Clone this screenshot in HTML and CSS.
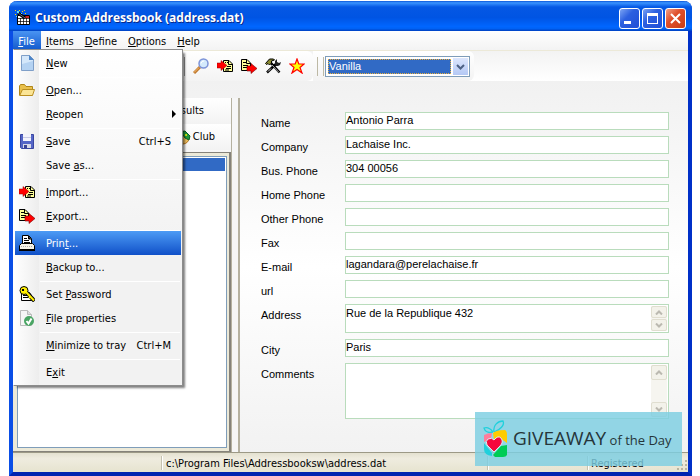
FILE: index.html
```
<!DOCTYPE html>
<html lang="en">
<head>
 <meta charset="utf-8">
 <title>Custom Addressbook (address.dat)</title>
 <meta name="viewport" content="width=device-width, initial-scale=1">
 <link rel="stylesheet" href="styles.css">
</head>
<body>

<!-- icons used more than once -->
<svg class="sprite" width="0" height="0">
	<symbol id="icon-import" viewBox="0 0 16 16">
		<path fill="#ff9" stroke="#000" d="M6.500 2.500H12L15.500 6V13.500H6.500z"/>
		<path fill="none" stroke="#000" d="M11.500 3v3.500H15M10 8.500h4M9 10.500h5M8 12h4"/>
		<path stroke="#000" stroke-dasharray="1 1" d="M8 4.500h3"/>
		<path fill="#f00" stroke="#900" stroke-width=".5" d="M0 5h4V2.500l6 5-6 5V10H0z"/>
	</symbol>
	<symbol id="icon-export" viewBox="0 0 16 16">
		<path fill="#ff9" stroke="#000" d="M.5 1.500H6L9.500 5V12.500H.5z"/>
		<path fill="none" stroke="#000" d="M5.500 2v3.500H9M2 4.500h3M2 7.500h5M2 9.500h4"/>
		<path fill="#f00" stroke="#700" stroke-width=".6" d="M6 8h4V5.500l6 5-6 5V13H6z"/>
	</symbol>
	<symbol id="arrow-up" viewBox="0 0 8 5"><path fill="none" stroke="#bbb9b0" stroke-width="2" d="M1 4.500L4 1.500l3 3"/></symbol>
	<symbol id="arrow-down" viewBox="0 0 8 5"><path fill="none" stroke="#bbb9b0" stroke-width="2" d="M1 .5L4 3.500l3-3"/></symbol>
</svg>

<div class="window">

	<header class="titlebar">
		<svg class="icon" viewBox="0 0 16 16">
			<path fill="#fff" stroke="#000" d="M2.500 5.500h12v9h-12z"/>
			<path fill="#c22" d="M9 6h5v2H9z"/>
			<path stroke="#000" stroke-width=".7" d="M3 8.500h11M3 11.500h11M5.500 8v6M8.500 8v6M11.500 8v6"/>
			<path stroke="#000" stroke-width="3" d="M3 3l7 5"/>
			<path stroke="#667" d="M3 3l7 5"/>
			<path fill="#fd0" d="M0 0h1v1H0zM4 0h1v1H4zM7 1h1v1H7zM9 0h1v1H9zM0 4h1v1H0zM10 3h1v1h-1z"/>
			<path fill="#5df" d="M2 1h2v2H2zM6 3h1v1H6zM1 6h1v1H1z"/>
		</svg>
		<h1>Custom Addressbook (address.dat)</h1>
		<div class="controls">
			<button type="button" aria-label="Minimize"><svg viewBox="0 0 19 19"><path fill="#fff" d="M4 12h7v3H4z"/></svg></button>
			<button type="button" aria-label="Maximize"><svg viewBox="0 0 19 19"><path fill="#fff" fill-rule="evenodd" d="M4 4h11v11H4zM5 7v7h9V7z"/></svg></button>
			<button type="button" class="close" aria-label="Close"><svg viewBox="0 0 19 19"><path stroke="#fff" stroke-width="2" d="M5 5l9 9M14 5l-9 9"/></svg></button>
		</div>
	</header>

	<nav>
		<ul class="menubar">
			<li class="open">
				<button type="button"><u>F</u>ile</button>
				<ul class="menu">
					<li><button type="button">
						<svg class="icon" viewBox="0 0 16 16"><path fill="#d4e7fa" stroke="#7f9fc8" d="M2.500.5h8l4 4v11h-12z"/><path fill="#b4d2f2" d="M3 9l11-3v9H3z"/><path fill="#4f86c8" d="M10 0l5 5h-5z"/></svg>
						<span><u>N</u>ew</span></button></li>
					<li class="sep"></li>
					<li><button type="button">
						<svg class="icon" viewBox="0 0 16 16"><path fill="#e9c04c" stroke="#b08618" d="M.5 13V4l1-1.500h4L7 4.500h6.500V13z"/><path fill="#fbe596" stroke="#b98f22" d="M.7 13.500L3.500 7.500h12l-2 6z"/></svg>
						<span><u>O</u>pen...</span></button></li>
					<li><button type="button">
						<span><u>R</u>eopen</span>
						<svg class="more" viewBox="0 0 4 8"><path d="M0 0l4 4-4 4z"/></svg></button></li>
					<li class="sep"></li>
					<li><button type="button">
						<svg class="icon" viewBox="0 0 16 16"><path fill="#5566c6" stroke="#3a46a0" d="M1.500 1.500h13v14h-12l-1-1z"/><path fill="#f4f4fb" d="M4 1h8v7H4z"/><path fill="#c9cbe4" d="M4 4h8v1H4z"/><path fill="#d8d9e6" d="M4 11h8v4H4z"/><path fill="#3b4494" d="M5 12h3v3H5z"/></svg>
						<span><u>S</u>ave</span><kbd>Ctrl+S</kbd></button></li>
					<li><button type="button"><span>Save <u>a</u>s...</span></button></li>
					<li class="sep"></li>
					<li><button type="button"><svg class="icon"><use href="#icon-import"/></svg><span><u>I</u>mport...</span></button></li>
					<li><button type="button"><svg class="icon"><use href="#icon-export"/></svg><span><u>E</u>xport...</span></button></li>
					<li class="sep"></li>
					<li class="current"><button type="button">
						<svg class="icon" viewBox="0 0 16 16"><path fill="#fff" stroke="#000" d="M3.500 8.500v-8h6l3 3v5z"/><path stroke="#000" d="M5 3.500h3M5 5.500h5M5 7.500h6M9.500 1v3H12"/><path fill="#f4f2e8" stroke="#000" d="M.5 10.500l2-2h11l2 2v4H.5z"/><path stroke="#aaa" stroke-dasharray="1 1" d="M2 11.500h11"/><path fill="#000" d="M0 14h16v2H0z"/></svg>
						<span>Prin<u>t</u>...</span></button></li>
					<li><button type="button"><span><u>B</u>ackup to...</span></button></li>
					<li class="sep"></li>
					<li><button type="button">
						<svg class="icon" viewBox="0 0 16 16"><path fill="#fff" stroke="#000" d="M2.500 6.500h8l2 3v5h-10z"/><path stroke="#000" d="M4 9.500h4M4 11.500h6"/><path stroke="#000" stroke-width="4" d="M7 6l8.500 9"/><circle cx="5" cy="4.500" r="4" fill="#fe0" stroke="#000"/><path stroke="#fe0" stroke-width="2" d="M7 6l8 8.500M10 12l2-2"/><path fill="#000" d="M3 3h2v2H3z"/></svg>
						<span>Set <u>P</u>assword</span></button></li>
					<li><button type="button">
						<svg class="icon" viewBox="0 0 16 16"><path fill="#f6f6f6" stroke="#bbb" d="M1.500.5h7l4 4v11h-11z"/><path fill="#ddd" stroke="#bbb" d="M8.500.5v4h4"/><circle cx="10" cy="11" r="5" fill="#4aa564"/><path fill="none" stroke="#fff" stroke-width="2" d="M7.500 11l2 2.500 3-5"/></svg>
						<span><u>F</u>ile properties</span></button></li>
					<li class="sep"></li>
					<li><button type="button"><span><u>M</u>inimize to tray</span><kbd>Ctrl+M</kbd></button></li>
					<li class="sep"></li>
					<li><button type="button"><span>E<u>x</u>it</span></button></li>
				</ul>
			</li>
			<li><button type="button"><u>I</u>tems</button></li>
			<li><button type="button"><u>D</u>efine</button></li>
			<li><button type="button"><u>O</u>ptions</button></li>
			<li><button type="button"><u>H</u>elp</button></li>
		</ul>
	</nav>

	<div class="toolbars">
		<div class="toolbar main">
			<button type="button" aria-label="Find">
				<svg class="icon" viewBox="0 0 16 16"><path stroke="#c07a30" stroke-width="3" d="M1 15l6-6"/><path stroke="#f6be74" d="M1 14.500l5-5"/><circle cx="10.500" cy="5.500" r="4.500" fill="#d4eafc" stroke="#7c93d8" stroke-width="1.500"/><path fill="none" stroke="#fff" d="M8 5.500a3 3 0 0 1 3-2.500"/></svg></button>
			<button type="button" aria-label="Import"><svg class="icon"><use href="#icon-import"/></svg></button>
			<button type="button" aria-label="Export"><svg class="icon"><use href="#icon-export"/></svg></button>
			<button type="button" aria-label="Tools">
				<svg class="icon" viewBox="0 0 16 16"><path stroke="#000" stroke-width="2.500" d="M6 5l8.500 9.500M2 14.500L12 5"/><path stroke="#aaa" d="M7 7l7 7.500"/><path stroke="#ddd" d="M3 13.500l3-3"/><path fill="#8a8a30" stroke="#000" d="M.5 5.500l4-4.500h4l1 1-3 1v2l-2 2-1.500-1.500-1.500 1z"/><path fill="#222" d="M10 6V3l2-2v3l2 1 2-1-1 3-2 1h-2z"/></svg></button>
			<button type="button" aria-label="Favorites">
				<svg class="icon" viewBox="0 0 16 16"><path fill="#ff0" stroke="#f00" stroke-width="1.200" d="M8 1l1.800 5h5.400L11 9.500l2 5.500-5-3.500L3 15l2-5.500L.8 6h5.400z"/></svg></button>
		</div>
		<div class="toolbar style">
			<div class="combo">
				<select aria-label="Style"><option>Vanilla</option></select>
				<svg viewBox="0 0 15 17"><path fill="none" stroke="#4d6185" stroke-width="2" d="M4 7l3.500 3.500L11 7"/></svg>
			</div>
		</div>
	</div>

	<main>
		<section class="sidebar">
			<div class="tabs">
				<button type="button">Results</button>
				<button type="button"><svg class="icon" viewBox="0 0 16 16"><circle cx="8" cy="9" r="6" fill="#f0c060" stroke="#b87820"/><path fill="#1f9a3c" stroke="#0b6020" d="M4 3l6-1 5 5-1 4-4-2-2-3-4 1z"/><circle cx="11" cy="6" r="1" fill="#ff0"/></svg>Club</button>
			</div>
			<div class="list"><ul><li class="selected"></li></ul></div>
		</section>

		<form class="card">
			<label for="name">Name</label><input id="name" type="text" value="Antonio Parra">
			<label for="company">Company</label><input id="company" type="text" value="Lachaise Inc.">
			<label for="bus">Bus. Phone</label><input id="bus" type="text" value="304 00056">
			<label for="home">Home Phone</label><input id="home" type="text">
			<label for="other">Other Phone</label><input id="other" type="text">
			<label for="fax">Fax</label><input id="fax" type="text">
			<label for="email">E-mail</label><input id="email" type="text" value="lagandara@perelachaise.fr">
			<label for="url">url</label><input id="url" type="text">
			<label for="address">Address</label>
			<div class="memo short">
				<textarea id="address">Rue de la Republique 432</textarea>
				<div class="scroll"><button type="button" aria-label="Up"><svg><use href="#arrow-up"/></svg></button><button type="button" aria-label="Down"><svg><use href="#arrow-down"/></svg></button></div>
			</div>
			<label for="city">City</label><input id="city" type="text" value="Paris">
			<label for="comments">Comments</label>
			<div class="memo">
				<textarea id="comments"></textarea>
				<div class="scroll"><button type="button" aria-label="Up"><svg><use href="#arrow-up"/></svg></button><button type="button" aria-label="Down"><svg><use href="#arrow-down"/></svg></button></div>
			</div>
		</form>
	</main>

	<footer class="statusbar">
		<span></span>
		<span>c:\Program Files\Addressbooksw\address.dat</span>
		<span></span>
		<span>Registered</span>
		<svg class="grip" viewBox="0 0 12 12"><path fill="#b8b4a0" d="M9 0h2v2H9zM5 4h2v2H5zM9 4h2v2H9zM1 8h2v2H1zM5 8h2v2H5zM9 8h2v2H9z"/></svg>
	</footer>
</div>

<div class="watermark">
	<svg viewBox="0 0 26 38">
		<g fill="none" stroke="#20d0dc" stroke-width="1.300"><path d="M11 12C10 5 15 1 20 1c2 4-3 9-9 11"/><path d="M10 12C7 8 4 7 1 8c1 4 5 5 9 4"/></g>
		<path fill="#ff7d9c" d="M1 15q4-2 8-2l-1 6-7 3z"/>
		<path fill="#fc0" d="M10 13q3-3 12-3 2 1 2 5v8l-7-5-6 2z"/>
		<path fill="#20d0dc" d="M1 23l8 10v3Q1 35 1 29z"/>
		<path fill="#0c5" d="M10 35l8-9 6-1v10q-1 2-4 2H12z"/>
		<path fill="#f5083c" stroke="#d8f0f4" d="M11 32L4 25q-2-4 1-6 4-2 6 1 4-5 7-2 3 4-1 8z"/>
	</svg>
	<p><strong>GIVEAWAY</strong> of the Day</p>
</div>

</body>
</html>
```
FILE: styles.css
```
* {
	box-sizing: border-box;
}

body {
	margin: 1px 8px 0 9px;
	background: #fff;
	color: #000;
	font-family: "DejaVu Sans Condensed", "DejaVu Sans", Tahoma, sans-serif;
	font-size: 11px;
	line-height: 14px;
}

ul {
	margin: 0;
	padding: 0;
	list-style: none;
}

button, input, textarea, select, kbd {
	font: inherit;
	color: inherit;
}

button {
	padding: 0;
	border: 0;
	background: none;
}

.sprite {
	position: absolute;
}

.icon {
	display: block;
	flex: none;
	width: 16px;
	height: 16px;
}

.window {
	display: flex;
	flex-direction: column;
	min-height: calc(100vh - 1px);
	border: solid #0a4ee6;
	border-width: 0 4px 4px;
	border-color: #0a4ee6 #0030c8 #0024b0 #0a4ee6;
	border-radius: 8px 8px 0 0;
	background: #f2f2f2;
}

/* title bar */
.titlebar {
	display: flex;
	align-items: center;
	height: 30px;
	margin: 0 -4px;
	padding: 4px 6px 0;
	border-radius: 8px 8px 0 0;
	background: linear-gradient(#0a54d8 0%, #3a94ff 6%, #0558e4 20%, #0054e3 55%, #0066ff 85%, #0062f5 92%, #0040c0 100%);
}

.titlebar h1 {
	flex: 1;
	margin: 0 0 0 4px;
	color: #fff;
	font: bold 12px/18px "Open Sans", "Trebuchet MS", sans-serif;
	text-shadow: 1px 1px #0a2a8a;
}

.controls {
	display: flex;
	gap: 2px;
}

.controls button {
	width: 21px;
	height: 21px;
	border: 1px solid #fff;
	border-radius: 3px;
	background: linear-gradient(135deg, #7ca4f4, #2c60e0 40%, #1f4fd6);
}

.controls .close {
	background: linear-gradient(135deg, #f0a088, #e0502c 40%, #c83c14);
}

.controls svg {
	display: block;
	width: 19px;
	height: 19px;
}

/* menu bar */
.menubar {
	display: flex;
	height: 20px;
	border-bottom: 1px solid #ece9d8;
	background: linear-gradient(#fff, #f3f3f3);
}

.menubar > li {
	position: relative;
}

.menubar > li > button {
	height: 19px;
	padding: 2px 6px 0 5px;
}

.menubar > .open > button {
	width: 28px;
	background: linear-gradient(#4a94f2, #1259cc);
	color: #fff;
}

.menu {
	position: absolute;
	z-index: 2;
	top: 18px;
	left: 0;
	width: 170px;
	padding: 1px;
	border: 1px solid #8c8c8c;
	border-left-color: #fff;
	background: linear-gradient(to right, #fff, #ededed) 0 0 / 25px 100% no-repeat, linear-gradient(#fff, #f2f2f2 60%);
	box-shadow: 3px 3px 2px -1px rgba(0, 0, 0, .5);
}

.menu button {
	display: flex;
	align-items: center;
	width: 100%;
	height: 24px;
	padding: 0 10px 0 4px;
	text-align: left;
}

.menu span {
	flex: 1;
	margin-left: 11px;
}

.menu span, .menu kbd {
	padding-top: 2px;
}

.menu span:first-child {
	margin-left: 27px;
}

.menu .current {
	background: linear-gradient(#4c9bf5, #1050c8);
	color: #fff;
}

.menu .sep {
	height: 3px;
	margin: 0 1px 0 25px;
	border-bottom: 1px solid #fff;
}

.menu .more {
	width: 4px;
	height: 8px;
	margin-right: -5px;
}

/* toolbars */
.toolbars {
	display: flex;
	height: 30px;
	background: linear-gradient(#f3f3f3, #fff);
}

.toolbar {
	display: flex;
	align-items: center;
	border-radius: 0 6px 6px 0;
	background: linear-gradient(#fff, #f3f3f3);
}

.main {
	gap: 8px;
	margin-left: 171px;
	padding-right: 8px;
}

.main::before {
	width: 1px;
	height: 19px;
	background: #999;
	content: "";
}

.style {
	padding: 0 4px;
}

.style::before {
	width: 5px;
	height: 19px;
	margin-right: 1px;
	border: solid #bdb9a5;
	border-width: 0 1px;
	content: "";
}

.combo {
	position: relative;
	width: 145px;
	height: 21px;
	padding: 2px;
	border: 1px solid #7f9db9;
	background: #fff;
}

.combo select {
	display: block;
	width: 123px;
	height: 15px;
	padding: 0;
	border: 1px dotted #e8b040;
	border-radius: 0;
	background: #316ac5;
	color: #fff;
	font-family: "Liberation Sans", Arial, sans-serif;
	line-height: 13px;
	appearance: none;
}

.combo svg {
	position: absolute;
	top: 1px;
	right: 1px;
	width: 15px;
	height: 17px;
	background: linear-gradient(#dce6fd, #b4c8f4);
	pointer-events: none;
}

/* body */
main {
	display: flex;
	flex: 1;
	padding-top: 17px;
	background: linear-gradient(#f1f1f1, #fff 50%, #f2f2f2);
}

.sidebar {
	display: flex;
	flex-direction: column;
	width: 218px;
}

.tabs {
	height: 54px;
}

.tabs button {
	display: flex;
	align-items: center;
	justify-content: flex-end;
	gap: 2px;
	width: 100%;
	height: 26px;
	padding-right: 16px;
	background: linear-gradient(#fff, #f3f3f3);
}

.tabs button:first-child {
	padding-right: 27px;
}

.list {
	flex: 1;
	padding: 3px 2px 3px 4px;
	border: solid #85827a;
	border-width: 1px 2px 1px 0;
	background: #ece9d8;
}

.list ul {
	height: 100%;
	padding: 1px;
	border: 1px solid #7f9db9;
	background: #fff;
}

.selected {
	height: 13px;
	background: #316ac5;
}

/* address card */
.card {
	display: grid;
	flex: 1;
	grid-template-columns: 84px 1fr;
	gap: 6px 0;
	align-content: start;
	margin-left: 7px;
	padding: 14px 19px 0 21px;
	border-left: 2px solid #b5b1a0;
	box-shadow: -6px 0 #f6f6f6, -7px 0 #b5b1a0;
	font-family: "Liberation Sans", Arial, sans-serif;
}

.card label {
	height: 18px;
	padding-top: 4px;
}

.card input, .memo {
	width: 100%;
	height: 18px;
	padding: 0 0 2px;
	border: 1px solid #b9dcbc;
	background: #fff;
}

.memo {
	display: flex;
	height: 56px;
	padding: 1px 1px 1px 0;
}

.short {
	height: 29px;
}

.memo textarea {
	flex: 1;
	padding: 0;
	border: 0;
	background: none;
	resize: none;
	outline: 0;
	overflow: hidden;
}

.scroll {
	display: flex;
	flex-direction: column;
	justify-content: space-between;
	width: 16px;
	background: #f6f5f0;
}

.scroll button {
	display: flex;
	align-items: center;
	justify-content: center;
	height: 15px;
	border: 1px solid #e0ded0;
	border-radius: 2px;
	background: #f3f2ea;
}

.short .scroll button {
	height: 12px;
}

.scroll svg {
	width: 8px;
	height: 5px;
}

/* status bar */
.statusbar {
	display: flex;
	align-items: center;
	height: 20px;
	border-top: 1px solid #9c9986;
	background: linear-gradient(#e4e1d0, #efecdf 30%, #e6e3cf);
}

.statusbar span {
	width: 100px;
	height: 14px;
	padding: 1px 0 0 3px;
	border-left: 1px solid #c5c2b0;
	box-shadow: inset 1px 0 #fff;
}

.statusbar span:first-child {
	width: 148px;
	border: 0;
	box-shadow: none;
}

.statusbar span:nth-child(2) {
	flex: 1;
	padding-left: 4px;
}

.statusbar span:nth-child(4) {
	width: 89px;
}

.grip {
	align-self: flex-end;
	width: 12px;
	height: 12px;
}

/* banner over the lower right corner */
.watermark {
	position: absolute;
	right: 18px;
	bottom: 10px;
	display: flex;
	align-items: center;
	gap: 4px;
	width: 207px;
	height: 54px;
	padding: 0 8px;
	background: rgba(124, 206, 226, .82);
	color: #26353a;
}

.watermark svg {
	flex: none;
	width: 26px;
	height: 38px;
}

.watermark p {
	margin: 0;
	font: 13px/24px "Open Sans", sans-serif;
	white-space: nowrap;
}

.watermark strong {
	font-size: 19px;
	font-weight: normal;
}
```
